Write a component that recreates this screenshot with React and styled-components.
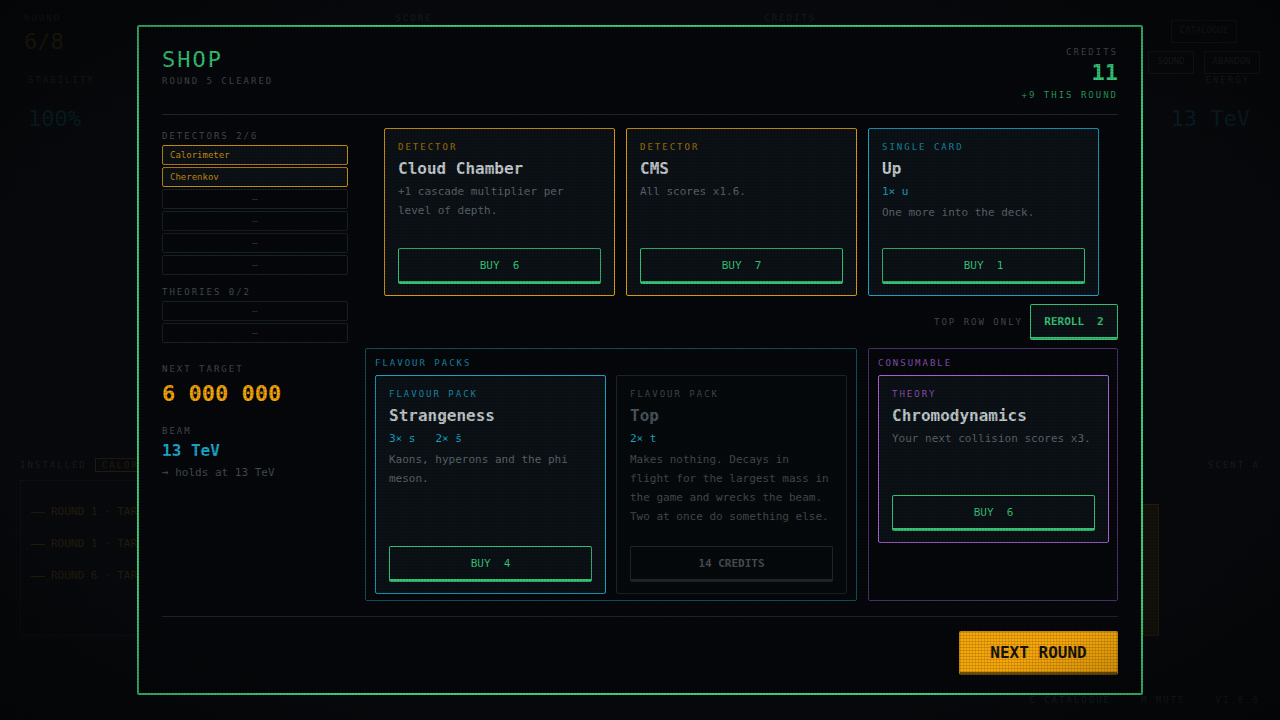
import styled, { createGlobalStyle } from "styled-components";

const tones = {
  amber: { border: "#e09c10", label: "#a87508", group: "#6b4c08" },
  cyan: { border: "#1ba6c9", label: "#178ba8", group: "#0e4f5e" },
  violet: { border: "#a964d8", label: "#8a52b4", group: "#48306a" },
  muted: { border: "#1b2429", label: "#3f474c", group: "#1b2429" },
};

const GlobalStyle = createGlobalStyle`
  html, body {
    margin: 0;
    background: #050709;
    overflow: hidden;
  }
  * { box-sizing: border-box; }
  body, button { font-family: "DejaVu Sans Mono", "Liberation Mono", monospace; }
`;

const Screen = styled.div`
  position: relative;
  width: 1280px;
  height: 720px;
  overflow: hidden;
  background: #07090c;
`;

/* game behind the shop, mostly hidden by the backdrop */
const Game = styled.div`
  display: flex;
  flex-direction: column;
  height: 720px;
  padding: 12px 20px 14px;
  opacity: 0.13;
  color: #8b979e;
  font-size: 9px;
`;

const Hud = styled.div`
  display: flex;
  justify-content: space-between;
  height: 62px;
  padding-left: 4px;
`;

const HudCol = styled.div`
  display: flex;
  flex-direction: column;
  gap: 4px;
`;

const GameLabel = styled.div`
  font-size: 9px;
  letter-spacing: 2px;
  line-height: 12px;
`;

const RoundValue = styled.div`
  font-size: 22px;
  line-height: 28px;
  color: #e09c10;
`;

const HudButtons = styled.div`
  display: flex;
  flex-wrap: wrap;
  justify-content: center;
  width: 112px;
  gap: 8px 10px;
  margin-top: 8px;
`;

const HudButton = styled.div`
  padding: 3px 8px;
  border: 1px solid #5a666c;
  font-size: 9px;
  line-height: 12px;
`;

const StatRow = styled.div`
  display: flex;
  justify-content: space-between;
  padding: 0 10px 0 8px;
  height: 64px;
`;

const StatCol = styled.div`
  display: flex;
  flex-direction: column;
  gap: 20px;
  align-items: ${(p) => (p.$end ? "flex-end" : "flex-start")};
`;

const StatValue = styled.div`
  font-size: 22px;
  line-height: 26px;
  color: #1ba6c9;
`;

const Middle = styled.div`
  flex: 1;
  display: flex;
  flex-direction: column;
  justify-content: flex-end;
`;

const Installed = styled.div`
  display: flex;
  align-items: center;
  justify-content: space-between;
  height: 16px;
`;

const InstalledLeft = styled.div`
  display: flex;
  align-items: center;
  gap: 8px;
`;

const InstalledChip = styled.div`
  padding: 1px 6px;
  border: 1px solid #e09c10;
  color: #e09c10;
  letter-spacing: 2px;
`;

const LogPanel = styled.div`
  display: flex;
  justify-content: space-between;
  height: 156px;
  margin: 7px 0 58px;
`;

const LogBox = styled.div`
  display: flex;
  flex-direction: column;
  gap: 14px;
  width: 400px;
  padding: 22px 10px;
  border: 1px solid #33404a;
`;

const LogLine = styled.div`
  display: flex;
  align-items: center;
  gap: 6px;
  font-size: 11px;
  line-height: 18px;
  color: #e09c10;
  &::before {
    content: "";
    width: 14px;
    height: 1px;
    background: #e09c10;
  }
`;

const SidePanel = styled.div`
  width: 16px;
  margin: 24px 101px 0 0;
  border: 1px solid #e09c10;
  background: #6b4c08;
`;

const GameFooter = styled.div`
  display: flex;
  justify-content: flex-end;
  gap: 30px;
  font-size: 9px;
  letter-spacing: 2px;
  line-height: 12px;
`;

const Backdrop = styled.div`
  position: absolute;
  inset: 0;
  display: flex;
  align-items: center;
  justify-content: center;
  padding-left: 0;
`;

const Modal = styled.div`
  width: 1006px;
  height: 670px;
  display: flex;
  flex-direction: column;
  padding: 0 23px;
  background: #05070a;
  border: 2px solid #3bd07e;
  border-radius: 2px;
`;

const Header = styled.header`
  display: flex;
  justify-content: space-between;
  padding: 19px 0 13px;
  border-bottom: 1px solid #1b252a;
`;

const Title = styled.h1`
  margin: 0;
  font-size: 22px;
  line-height: 28px;
  font-weight: 400;
  letter-spacing: 2px;
  color: #38cf7e;
`;

const Micro = styled.div`
  font-size: 9px;
  line-height: 12px;
  letter-spacing: 2px;
  color: ${(p) => p.$color || "#434a50"};
`;

const SubTitle = styled(Micro)`
  margin-top: 1px;
`;

const CreditsBox = styled.div`
  display: flex;
  flex-direction: column;
  align-items: flex-end;
`;

const CreditsValue = styled.div`
  margin: 2px 0 3px;
  font-size: 22px;
  line-height: 26px;
  font-weight: 700;
  color: #38cf7e;
`;

const Body = styled.div`
  flex: 1;
  display: grid;
  grid-template-columns: 186px 753px;
  column-gap: 17px;
  padding-top: 13px;
`;

const LeftCol = styled.aside`
  display: flex;
  flex-direction: column;
  padding-top: 2px;
`;

const SlotList = styled.div`
  display: flex;
  flex-direction: column;
  gap: 2px;
  margin-top: 3px;
  margin-bottom: 11px;
`;

const Slot = styled.div`
  height: 20px;
  padding: 0 7px;
  display: flex;
  align-items: center;
  justify-content: ${(p) => (p.$filled ? "flex-start" : "center")};
  font-size: 9px;
  color: ${(p) => (p.$filled ? "#c98d0c" : "#3a4248")};
  background: ${(p) => (p.$filled ? "#0c1116" : "transparent")};
  border: 1px solid ${(p) => (p.$filled ? "#c98d0c" : "#182126")};
  border-radius: 2px;
`;

const TargetLabel = styled(Micro)`
  margin-top: ${(p) => p.$top}px;
`;

const TargetValue = styled.div`
  margin-top: 5px;
  font-size: 22px;
  line-height: 28px;
  font-weight: 700;
  color: #f5a60a;
`;

const BeamValue = styled.div`
  margin-top: 4px;
  font-size: 16px;
  line-height: 20px;
  font-weight: 700;
  color: #1ba6c9;
`;

const BeamNote = styled.div`
  margin-top: 5px;
  font-size: 11px;
  line-height: 14px;
  color: #444b50;
`;

const RightCol = styled.div`
  display: flex;
  flex-direction: column;
`;

const TopRow = styled.div`
  display: flex;
  justify-content: center;
  gap: 11px;
  height: 168px;
`;

const RerollRow = styled.div`
  display: flex;
  align-items: center;
  justify-content: flex-end;
  gap: 7px;
  margin: 8px 0;
`;

const BottomRow = styled.div`
  display: grid;
  grid-template-columns: 492px 250px;
  column-gap: 11px;
  height: 253px;
`;

const Group = styled.section`
  padding: 8px 9px 6px;
  border: 1px solid ${(p) => tones[p.$tone].group};
  border-radius: 2px;
`;

const GroupCards = styled.div`
  display: flex;
  gap: 10px;
  align-items: flex-start;
  margin-top: 6px;
`;

const Card = styled.article`
  width: 231px;
  height: ${(p) => p.$height}px;
  flex-shrink: 0;
  display: flex;
  flex-direction: column;
  padding: 12px 13px 11px;
  background: ${(p) => (p.$tone === "muted" ? "#06090b" : "#0b1116")};
  border: 1px solid ${(p) => tones[p.$tone].border};
  border-radius: 2px;
`;

const CardTitle = styled.h3`
  margin: 6px 0 0;
  font-size: 16px;
  line-height: 20px;
  font-weight: 700;
  color: ${(p) => (p.$muted ? "#4c565c" : "#c3cacc")};
`;

const Counts = styled.div`
  display: flex;
  gap: 20px;
  margin-top: 5px;
  font-size: 11px;
  line-height: 16px;
  color: #1ba6c9;
`;

const Desc = styled.p`
  margin: 2.5px 0 0;
  font-size: 11px;
  line-height: 19px;
  color: ${(p) => (p.$muted ? "#434b50" : "#5c656a")};
`;

const Action = styled.button`
  margin-top: auto;
  flex-shrink: 0;
  height: 36px;
  display: flex;
  align-items: center;
  justify-content: center;
  gap: 13px;
  padding: 0 13px;
  font-size: 11px;
  font-weight: ${(p) => (p.$muted ? 700 : 400)};
  color: ${(p) => (p.$muted ? "#465057" : "#36c477")};
  background: ${(p) => (p.$fill ? "#0b1116" : "transparent")};
  border: 1px solid ${(p) => (p.$muted ? "#1e272c" : "#36c477")};
  border-bottom-width: 3px;
  border-radius: 2px;
`;

const Reroll = styled(Action)`
  margin-top: 0;
  width: 88px;
  font-weight: 700;
`;

const Footer = styled.footer`
  display: flex;
  justify-content: flex-end;
  margin-top: 15px;
  padding-top: 14px;
  padding-bottom: 18px;
  border-top: 1px solid #1b252a;
`;

const NextButton = styled.button`
  width: 159px;
  height: 44px;
  font-size: 16px;
  font-weight: 700;
  color: #16130a;
  background: #f5a60a;
  border: 1px solid #c98a0a;
  border-bottom: 3px solid #6f4f0a;
  border-radius: 2px;
`;

/* scanlines and dark corners over the whole tube */
const Crt = styled.div`
  position: absolute;
  inset: 0;
  pointer-events: none;
  background-image:
    radial-gradient(ellipse at center, transparent 72%, rgba(0, 0, 0, 0.45) 100%),
    repeating-linear-gradient(0deg, rgba(0, 0, 0, 0.14) 0 1px, transparent 1px 3px),
    repeating-linear-gradient(90deg, rgba(0, 0, 0, 0.1) 0 1px, transparent 1px 3px);
`;

const Buy = ({ cost }) => (
  <Action>
    <span>BUY</span>
    <span>{cost}</span>
  </Action>
);

const ShopCard = ({ tone, height = 168, label, title, counts, desc, children }) => {
  const muted = tone === "muted";
  return (
    <Card $tone={tone} $height={height}>
      <Micro $color={tones[tone].label}>{label}</Micro>
      <CardTitle $muted={muted}>{title}</CardTitle>
      {counts && (
        <Counts>
          {counts.map((c) => (
            <span key={c}>{c}</span>
          ))}
        </Counts>
      )}
      <Desc $muted={muted}>{desc}</Desc>
      {children}
    </Card>
  );
};

const BackgroundGame = () => (
  <Game>
    <Hud>
      <HudCol>
        <GameLabel>ROUND</GameLabel>
        <RoundValue>6/8</RoundValue>
      </HudCol>
      <GameLabel>SCORE</GameLabel>
      <HudCol>
        <GameLabel>CREDITS</GameLabel>
      </HudCol>
      <HudButtons>
        <HudButton>CATALOGUE</HudButton>
        <HudButton>SOUND</HudButton>
        <HudButton>ABANDON</HudButton>
      </HudButtons>
    </Hud>
    <StatRow>
      <StatCol>
        <GameLabel>STABILITY</GameLabel>
        <StatValue>100%</StatValue>
      </StatCol>
      <StatCol $end>
        <GameLabel>ENERGY</GameLabel>
        <StatValue>13 TeV</StatValue>
      </StatCol>
    </StatRow>
    <Middle>
      <Installed>
        <InstalledLeft>
          <GameLabel>INSTALLED</GameLabel>
          <InstalledChip>CALORIMETER</InstalledChip>
        </InstalledLeft>
        <GameLabel>SCENT A</GameLabel>
      </Installed>
      <LogPanel>
        <LogBox>
          <LogLine>ROUND 1 · TARGET</LogLine>
          <LogLine>ROUND 1 · TARGET</LogLine>
          <LogLine>ROUND 6 · TARGET</LogLine>
        </LogBox>
        <SidePanel />
      </LogPanel>
    </Middle>
    <GameFooter>
      <span>C CATALOGUE</span>
      <span>M MUTE</span>
      <span>V1.0.0</span>
    </GameFooter>
  </Game>
);

const App = () => (
  <Screen>
    <GlobalStyle />
    <BackgroundGame />
    <Backdrop>
      <Modal>
        <Header>
          <div>
            <Title>SHOP</Title>
            <SubTitle>ROUND 5 CLEARED</SubTitle>
          </div>
          <CreditsBox>
            <Micro>CREDITS</Micro>
            <CreditsValue>11</CreditsValue>
            <Micro $color="#2a9a5e">+9 THIS ROUND</Micro>
          </CreditsBox>
        </Header>
        <Body>
          <LeftCol>
            <Micro>DETECTORS  2/6</Micro>
            <SlotList>
              <Slot $filled>Calorimeter</Slot>
              <Slot $filled>Cherenkov</Slot>
              <Slot>–</Slot>
              <Slot>–</Slot>
              <Slot>–</Slot>
              <Slot>–</Slot>
            </SlotList>
            <Micro>THEORIES  0/2</Micro>
            <SlotList>
              <Slot>–</Slot>
              <Slot>–</Slot>
            </SlotList>
            <TargetLabel $top={9}>NEXT TARGET</TargetLabel>
            <TargetValue>6 000 000</TargetValue>
            <TargetLabel $top={17}>BEAM</TargetLabel>
            <BeamValue>13 TeV</BeamValue>
            <BeamNote>→ holds at 13 TeV</BeamNote>
          </LeftCol>
          <RightCol>
            <TopRow>
              <ShopCard tone="amber" label="DETECTOR" title="Cloud Chamber" desc="+1 cascade multiplier per level of depth.">
                <Buy cost={6} />
              </ShopCard>
              <ShopCard tone="amber" label="DETECTOR" title="CMS" desc="All scores x1.6.">
                <Buy cost={7} />
              </ShopCard>
              <ShopCard tone="cyan" label="SINGLE CARD" title="Up" counts={["1× u"]} desc="One more into the deck.">
                <Buy cost={1} />
              </ShopCard>
            </TopRow>
            <RerollRow>
              <Micro>TOP ROW ONLY</Micro>
              <Reroll $fill>
                <span>REROLL</span>
                <span>2</span>
              </Reroll>
            </RerollRow>
            <BottomRow>
              <Group $tone="cyan">
                <Micro $color={tones.cyan.label}>FLAVOUR PACKS</Micro>
                <GroupCards>
                  <ShopCard
                    tone="cyan"
                    height={219}
                    label="FLAVOUR PACK"
                    title="Strangeness"
                    counts={["3× s", "2× s̄"]}
                    desc="Kaons, hyperons and the phi meson."
                  >
                    <Buy cost={4} />
                  </ShopCard>
                  <ShopCard
                    tone="muted"
                    height={219}
                    label="FLAVOUR PACK"
                    title="Top"
                    counts={["2× t"]}
                    desc="Makes nothing. Decays in flight for the largest mass in the game and wrecks the beam. Two at once do something else."
                  >
                    <Action $muted>14 CREDITS</Action>
                  </ShopCard>
                </GroupCards>
              </Group>
              <Group $tone="violet">
                <Micro $color={tones.violet.label}>CONSUMABLE</Micro>
                <GroupCards>
                  <ShopCard tone="violet" label="THEORY" title="Chromodynamics" desc="Your next collision scores x3.">
                    <Buy cost={6} />
                  </ShopCard>
                </GroupCards>
              </Group>
            </BottomRow>
          </RightCol>
        </Body>
        <Footer>
          <NextButton>NEXT ROUND</NextButton>
        </Footer>
      </Modal>
    </Backdrop>
    <Crt />
  </Screen>
);

export default App;
